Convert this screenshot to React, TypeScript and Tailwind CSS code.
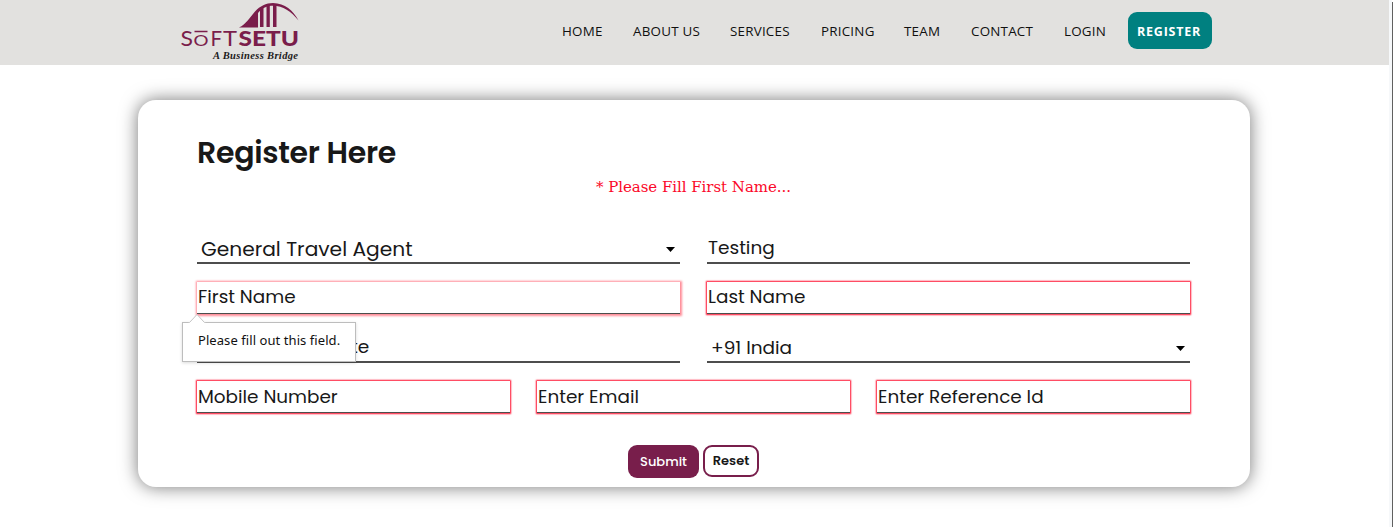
import React from "react";

const poppins = "font-['Poppins',sans-serif] text-[#181818]";

const navItems = [
  { label: "HOME", cls: "w-[71px]" },
  { label: "ABOUT US", cls: "w-[97px]" },
  { label: "SERVICES", cls: "w-[91px]" },
  { label: "PRICING", cls: "w-[83px]" },
  { label: "TEAM", cls: "w-[67px]" },
  { label: "CONTACT", cls: "w-[93px]" },
  { label: "LOGIN", cls: "w-[64px]" },
];

function Logo() {
  return (
    <svg width="120" height="65" viewBox="0 0 120 65" className="shrink-0">
      <g fill="#7a1d4b">
        <path d="M58 27.500C65 24.500 69 17 74 11.500C79 6 85 3 92 3C104 3.500 112 10 117.500 20.500C110 11 102 6 92 5.700C86 5.700 81 8 77 13V27.500Z" />
        <path d="M79 10L82.500 7V27H79ZM85.500 6L88.800 5V27H85.500ZM92 4.500H95.500V27H92Z" />
      </g>
      <path d="M13.500 31.500H26.500" stroke="#7a1d4b" strokeWidth="1.500" />
      <g fill="#7a1d4b" fontFamily="Lato, sans-serif">
        <text x="-0.5" y="45.700" fontSize="20.500" textLength="12.500" lengthAdjust="spacingAndGlyphs">S</text>
        <text x="12.500" y="45.700" fontSize="16" textLength="15" lengthAdjust="spacingAndGlyphs">O</text>
        <text x="29.500" y="45.700" fontSize="20.500">F</text>
        <text x="42" y="45.700" fontSize="20.500" textLength="14" lengthAdjust="spacingAndGlyphs">T</text>
        <text x="57.500" y="45.700" fontSize="20.500" fontWeight="900" textLength="60.500" lengthAdjust="spacingAndGlyphs">
          SETU
        </text>
      </g>
      <text
        x="32"
        y="59"
        fill="#1c1a1b"
        fontFamily="'Monotype Corsiva', 'Liberation Serif', serif"
        fontStyle="italic"
        fontWeight="bold"
        fontSize="10.500"
        textLength="85"
      >
        A Business Bridge
      </text>
    </svg>
  );
}

function Caret() {
  return (
    <svg width="9" height="5" viewBox="0 0 9 5" className="mt-[6px] shrink-0">
      <path d="M0 0H9L4.500 5Z" fill="#000" />
    </svg>
  );
}

const line = "h-[34px] border-b-2 border-[#4d4d4d] flex items-center";
const invalid =
  "h-[32px] border-b border-[#4d4d4d] flex items-center pl-px shadow-[0_0_1.5px_1px_#ff0f2f]";

export default function App() {
  return (
    <div className="flex h-[527px] w-[1393px] overflow-hidden bg-white">
      <div className="flex w-[1389px] shrink-0 flex-col">
        <header className="flex h-[65px] shrink-0 items-start bg-[#e2e1df] pl-[181px]">
          <Logo />
          <nav className="ml-[261px] flex h-[63px] items-center font-['Open_Sans',sans-serif] text-[13.4px] tracking-[0.22px] text-[#101010]">
            {navItems.map((n) => (
              <a key={n.label} className={`shrink-0 whitespace-nowrap ${n.cls}`}>
                {n.label}
              </a>
            ))}
          </nav>
          <button className="mt-[12px] flex h-[37px] w-[84px] items-center justify-center rounded-[9px] bg-[#008080] pr-[2px] pt-[3px] font-['Open_Sans',sans-serif] text-[12.5px] font-bold tracking-[0.75px] text-white">
            REGISTER
          </button>
        </header>

        <main
          className={`ml-[138px] mt-[35px] flex h-[387px] w-[1112px] shrink-0 flex-col rounded-[18px] bg-white pl-[59px] pr-[60px] shadow-[0_0_18px_#777] ${poppins}`}
        >
          <h1 className="mt-[32px] h-[42px] text-[30px] font-semibold leading-[42px] tracking-[-0.3px]">
            Register Here
          </h1>
          <p className="h-[26px] text-center font-['Roboto_Slab','DejaVu_Serif',serif] text-[15px] leading-[26px] tracking-[-0.05px] text-[#fb0829]">
            * Please Fill First Name...
          </p>

          <div className="mt-[30px] grid grid-cols-2 gap-x-[27px] text-[18.5px]">
            <div className={`${line} justify-between pl-1 pr-[5px] text-[20.2px]`}>
              <span className="pt-[6px]">General Travel Agent</span>
              <Caret />
            </div>
            <div className={`${line} pl-px pt-[3px]`}>Testing</div>
          </div>

          <div className="mt-[18px] grid grid-cols-2 gap-x-[27px] text-[18.4px]">
            <div className="relative h-[32px] border-b border-[#4d4d4d] shadow-[0_0_2px_1.5px_#ff8c98]">
              <div className="flex h-[31px] items-center pb-px pl-px">First Name</div>
              <div className="absolute left-[-15px] top-[40px] z-10 flex h-[40px] w-[174px] items-center border border-[#bdbdbd] bg-white pl-[15px] font-['Noto_Sans',sans-serif] text-[13px] tracking-[0.07px] text-[#111] shadow-[0_1px_3px_rgba(0,0,0,0.15)]">
                <svg className="absolute left-[5px] top-[-9px]" width="18" height="10" viewBox="0 0 18 10">
                  <path d="M0 9.500L9 0.500L18 9.500V10H0Z" fill="#fff" />
                  <path d="M0 8.500H1.500L9 0.500L16.500 8.500H18" fill="none" stroke="#c4c4c4" />
                </svg>
                <span className="pb-[3px]">Please fill out this field.</span>
              </div>
            </div>
            <div className={`${invalid} pb-px`}>Last Name</div>
          </div>

          <div className="mt-[15px] grid grid-cols-2 gap-x-[27px] text-[18.5px]">
            <div className={`${line} pl-[154px]`}>
              <span className="pt-[4px]">te</span>
            </div>
            <div className={`${line} justify-between pl-1 pr-[5px]`}>
              <span className="pt-[5px]">+91 India</span>
              <Caret />
            </div>
          </div>

          <div className="mt-[18px] grid grid-cols-3 gap-x-[27px] text-[18.4px]">
            <div className={invalid}>Mobile Number</div>
            <div className={invalid}>Enter Email</div>
            <div className={invalid}>Enter Reference Id</div>
          </div>

          <div className="mt-[32px] flex items-start justify-center gap-1 text-[13px] font-semibold">
            <button className="h-[33px] w-[71px] rounded-[9px] bg-[#781e4b] font-medium text-white">Submit</button>
            <button className="h-[32px] w-[56px] rounded-[9px] border-2 border-[#781e4b] bg-white">Reset</button>
          </div>
        </main>
      </div>
      <div className="w-[3px] shrink-0 bg-[#f6f8fa]" />
      <div className="mt-[2px] w-px shrink-0 bg-[#606060]" />
    </div>
  );
}
